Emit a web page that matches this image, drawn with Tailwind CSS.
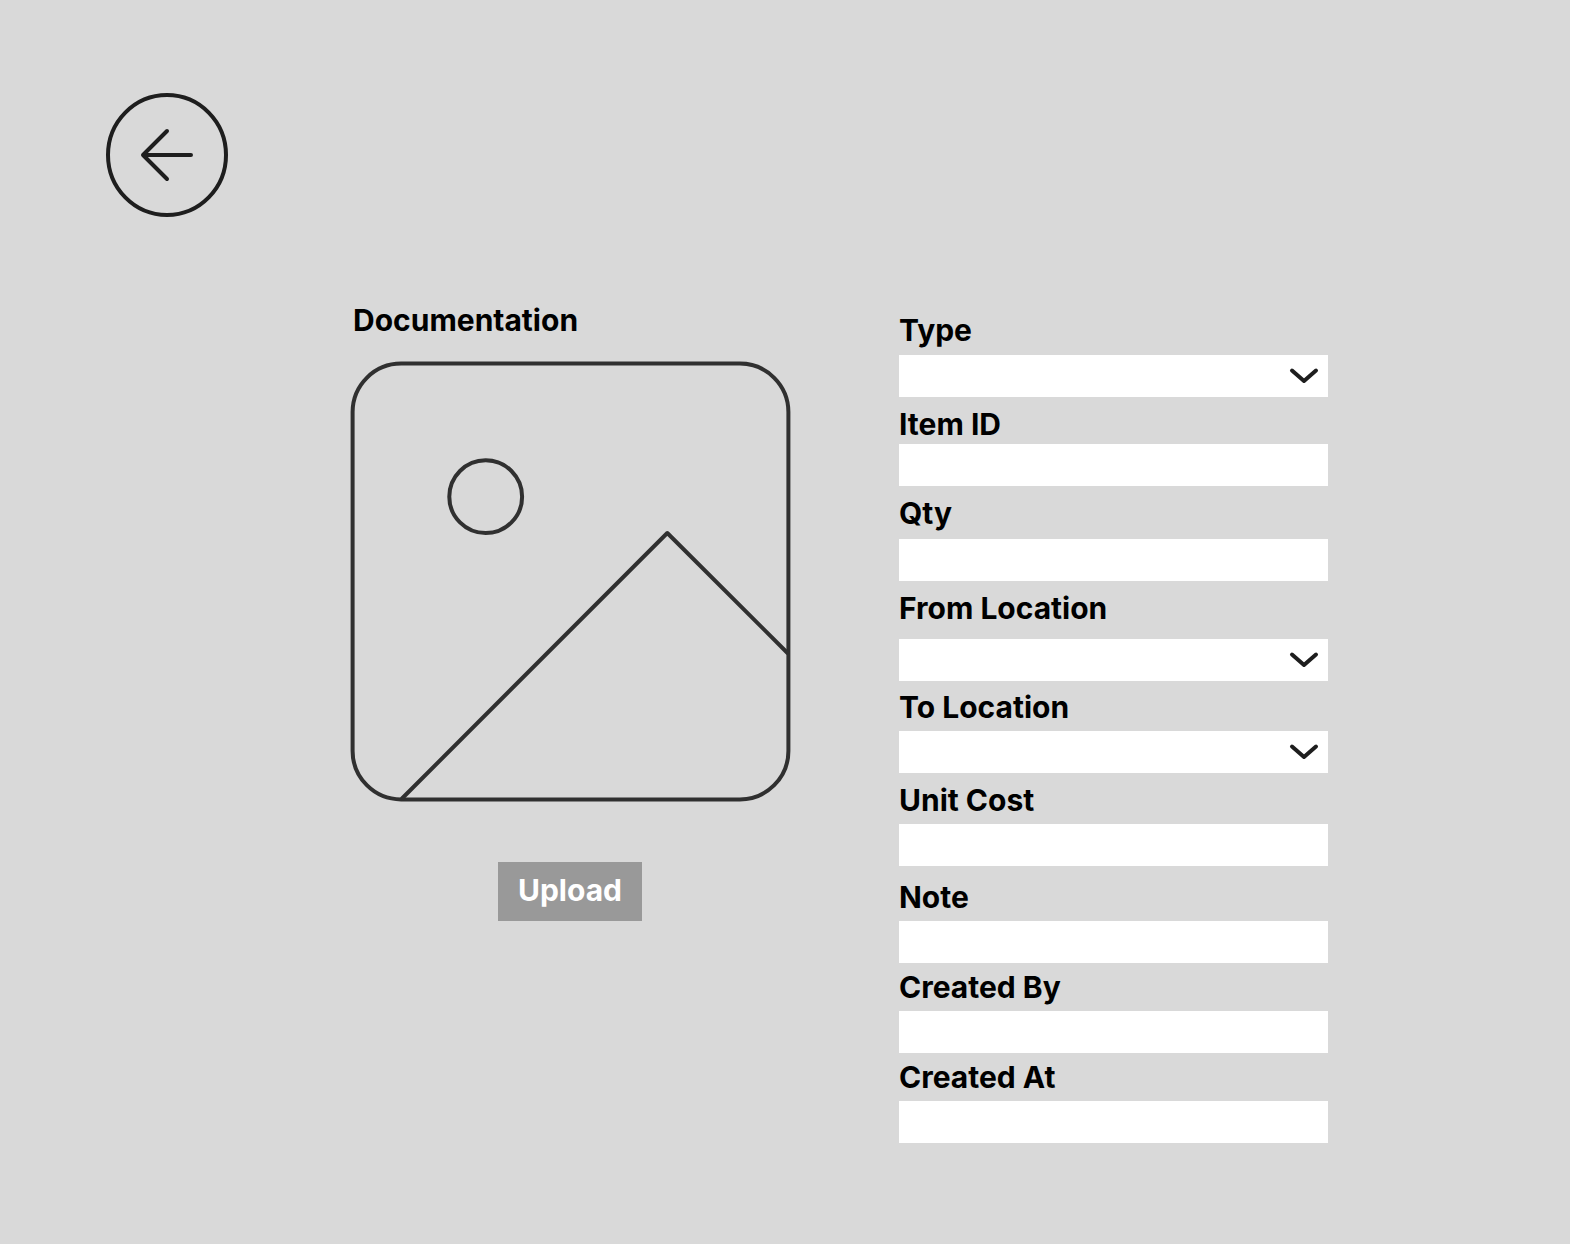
<!DOCTYPE html>
<html lang="en">
<head>
<meta charset="utf-8">
<meta name="viewport" content="width=device-width, initial-scale=1">
<title>Transaction</title>
<script src="https://cdn.jsdelivr.net/npm/@tailwindcss/browser@4"></script>
</head>
<body class="min-h-screen bg-[#d9d9d9] font-['Inter',sans-serif] text-[30px] leading-[36px] font-bold text-black">
<header class="px-6 pt-[93px] lg:px-[105px]">
  <button type="button" aria-label="Back" class="block size-[124px]">
    <svg viewBox="0 0 124 124" class="size-full" fill="none" stroke="#1e1e1e" stroke-width="4" stroke-linecap="round" stroke-linejoin="round">
      <ellipse cx="62" cy="62" rx="59" ry="60"/>
      <path d="M62 38 38 62l24 24M38 62h48"/>
    </svg>
  </button>
</header>
<main>
  <form class="grid items-start gap-12 px-6 pt-[85px] pb-[101px] lg:grid-cols-[440fr_429fr] lg:gap-[109px] lg:pr-[242px] lg:pl-[350px]">
    <section class="flex flex-col">
      <h2 class="mb-[23px] pl-[3px]">Documentation</h2>
      <svg viewBox="0 0 440 440" class="w-full overflow-visible" fill="none" stroke="#303030" stroke-width="4" stroke-linejoin="round" aria-hidden="true">
        <rect x="2.6" y="2.6" width="435.8" height="435.8" rx="48.5"/>
        <circle cx="135.7" cy="135.7" r="36.4"/>
        <path d="M51.5 438 317.3 172 438 292.5"/>
      </svg>
      <button type="button" class="mt-[61px] h-[59px] self-center bg-[#999] px-5 pb-[3px] text-white">Upload</button>
    </section>
    <section class="flex flex-col pt-[10px]">
      <label for="type" class="mb-[7px]">Type</label>
      <div class="relative mb-[9px]">
        <select id="type" class="block h-[42px] w-full appearance-none bg-white px-3 text-xl"></select>
        <svg viewBox="0 0 48 42" class="pointer-events-none absolute top-0 right-0 h-[42px] w-12" fill="none" stroke="#1e1e1e" stroke-width="4" stroke-linecap="round" stroke-linejoin="round"><path d="M12 15.5l12 10.5 12-10.5"/></svg>
      </div>
      <label for="item" class="mb-[2px]">Item ID</label>
      <input id="item" type="text" class="mb-[9px] h-[42px] w-full bg-white px-3 text-xl">
      <label for="qty" class="mb-[8px]">Qty</label>
      <input id="qty" type="text" class="mb-[9px] h-[42px] w-full bg-white px-3 text-xl">
      <label for="from" class="mb-[13px]">From Location</label>
      <div class="relative mb-[8px]">
        <select id="from" class="block h-[42px] w-full appearance-none bg-white px-3 text-xl"></select>
        <svg viewBox="0 0 48 42" class="pointer-events-none absolute top-0 right-0 h-[42px] w-12" fill="none" stroke="#1e1e1e" stroke-width="4" stroke-linecap="round" stroke-linejoin="round"><path d="M12 15.5l12 10.5 12-10.5"/></svg>
      </div>
      <label for="to" class="mb-[6px]">To Location</label>
      <div class="relative mb-[9px]">
        <select id="to" class="block h-[42px] w-full appearance-none bg-white px-3 text-xl"></select>
        <svg viewBox="0 0 48 42" class="pointer-events-none absolute top-0 right-0 h-[42px] w-12" fill="none" stroke="#1e1e1e" stroke-width="4" stroke-linecap="round" stroke-linejoin="round"><path d="M12 15.5l12 10.5 12-10.5"/></svg>
      </div>
      <label for="cost" class="mb-[6px]">Unit Cost</label>
      <input id="cost" type="text" class="mb-[13px] h-[42px] w-full bg-white px-3 text-xl">
      <label for="note" class="mb-[6px]">Note</label>
      <input id="note" type="text" class="mb-[6px] h-[42px] w-full bg-white px-3 text-xl">
      <label for="by" class="mb-[6px]">Created By</label>
      <input id="by" type="text" class="mb-[6px] h-[42px] w-full bg-white px-3 text-xl">
      <label for="at" class="mb-[6px]">Created At</label>
      <input id="at" type="text" class="h-[42px] w-full bg-white px-3 text-xl">
    </section>
  </form>
</main>
</body>
</html>
